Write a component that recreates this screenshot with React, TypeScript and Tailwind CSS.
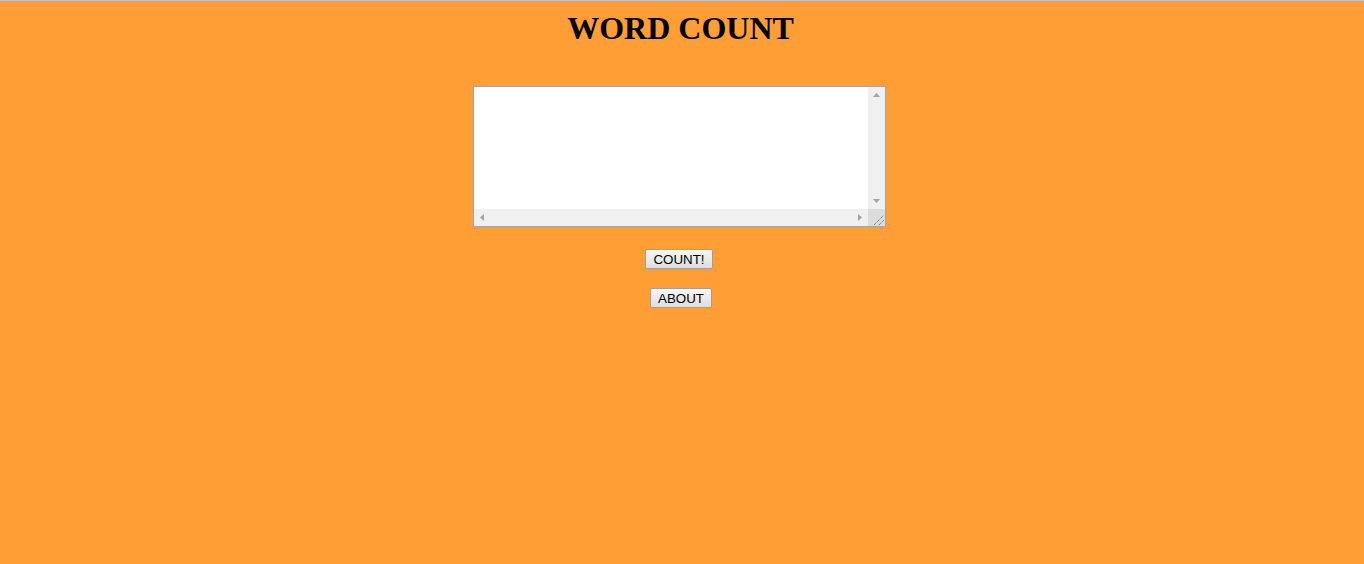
import React from "react";

export default function App() {
  return (
    <div className="min-h-[564px] w-full bg-[#ff9e35] border-t border-[#c4c4c4] flex flex-col items-center">
      <h1
        className="mt-[9px] ml-[-3px] text-[32px] leading-[36px] font-bold text-black"
        style={{ fontFamily: '"Liberation Serif", "Times New Roman", serif' }}
      >
        WORD COUNT
      </h1>

      <div className="mt-[40px] ml-[-5px] w-[413px] h-[141px] border border-[#a3a7ad] bg-white grid grid-cols-[1fr_17px] grid-rows-[1fr_17px]">
        <textarea className="resize-none outline-none border-0 bg-white p-[2px] text-[13px] overflow-hidden" />
        <div className="bg-[#f0f0f0] flex flex-col items-center justify-between py-[6px]">
          <svg width="7" height="4" viewBox="0 0 7 4">
            <polygon points="0,4 7,4 3.5,0" fill="#a3a3a3" />
          </svg>
          <svg width="7" height="4" viewBox="0 0 7 4">
            <polygon points="0,0 7,0 3.5,4" fill="#a3a3a3" />
          </svg>
        </div>
        <div className="bg-[#f0f0f0] flex items-center justify-between px-[6px]">
          <svg width="4" height="7" viewBox="0 0 4 7">
            <polygon points="4,0 4,7 0,3.5" fill="#a3a3a3" />
          </svg>
          <svg width="4" height="7" viewBox="0 0 4 7">
            <polygon points="0,0 0,7 4,3.5" fill="#a3a3a3" />
          </svg>
        </div>
        <div className="bg-[#dcdcdc] flex items-end justify-end">
          <svg width="17" height="17" viewBox="0 0 17 17">
            <line x1="6" y1="16" x2="16" y2="6" stroke="#555" strokeWidth="1" strokeDasharray="1 1" />
            <line x1="11" y1="16" x2="16" y2="11" stroke="#555" strokeWidth="1" strokeDasharray="1 1" />
          </svg>
        </div>
      </div>

      <button
        className="mt-[22px] ml-[-6px] h-[20px] px-[7px] border border-[#a0a0a0] rounded-[2px] bg-gradient-to-b from-[#f6f6f6] to-[#dedede] text-black text-[13.333px] leading-[17px]"
        style={{ fontFamily: '"Liberation Sans", Arial, sans-serif' }}
      >
        COUNT!
      </button>

      <button
        className="mt-[19px] ml-[-2px] h-[20px] px-[7px] border border-[#a0a0a0] rounded-[2px] bg-gradient-to-b from-[#f6f6f6] to-[#dedede] text-black text-[13.333px] leading-[17px]"
        style={{ fontFamily: '"Liberation Sans", Arial, sans-serif' }}
      >
        ABOUT
      </button>
    </div>
  );
}
